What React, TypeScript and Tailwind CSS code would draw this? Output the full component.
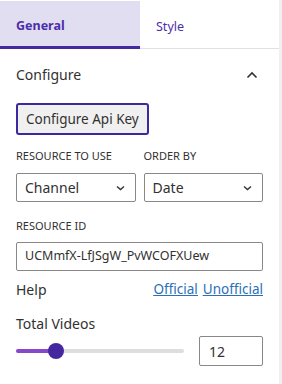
import React from "react";

export default function App() {
  const font = { fontFamily: '"Noto Sans", "Open Sans", sans-serif' };
  return (
    <div className="w-[282px] h-[384px] flex bg-white overflow-hidden text-[#323130]" style={font}>
      <div className="flex-1 flex flex-col">
        <div className="flex pt-[1px]">
          <div className="w-[140px] h-[48px] bg-[#e2def2] border-b-[3px] border-[#4527a0] flex items-center pt-[6px] pl-[16px] text-[12.5px] font-bold text-[#4b2fa8]">
            General
          </div>
          <div className="flex-1 h-[48px] border-b border-[#e1e1e1] flex items-center pt-[5px] pl-[16px] text-[12.5px] text-[#4b2fa8]">
            Style
          </div>
        </div>
        <div className="px-[16px]">
          <div className="flex items-center justify-between h-[50px] pt-[1px]">
            <span className="text-[14px]">Configure</span>
            <svg width="12" height="8" viewBox="0 0 12 8" className="mr-[5px]">
              <path d="M1.5 6.5 L6 2 L10.5 6.5" fill="none" stroke="#323130" strokeWidth="1.6" />
            </svg>
          </div>
          <div className="mt-[4px]">
            <button className="h-[32px] px-[8px] rounded-[3px] border-2 border-[#3b2a9c] bg-[#f0f0f0] text-[13.5px] text-[#323130]">
              Configure Api Key
            </button>
          </div>
          <div className="grid grid-cols-2 gap-[8px] mt-[13px]">
            <div>
              <div className="text-[11px] h-[16px] leading-[16px] uppercase">Resource to use</div>
              <div className="mt-[9px] h-[29px] border border-[#8a8886] rounded-[2px] flex items-center justify-between pl-[8px] pr-[10px] text-[14px]">
                <span>Channel</span>
                <svg width="9" height="6" viewBox="0 0 9 6"><path d="M1 1.5 L4.5 4.5 L8 1.5" fill="none" stroke="#323130" strokeWidth="1.4" /></svg>
              </div>
            </div>
            <div>
              <div className="text-[11px] h-[16px] leading-[16px] uppercase">Order by</div>
              <div className="mt-[9px] h-[29px] border border-[#8a8886] rounded-[2px] flex items-center justify-between pl-[8px] pr-[10px] text-[14px]">
                <span>Date</span>
                <svg width="9" height="6" viewBox="0 0 9 6"><path d="M1 1.5 L4.5 4.5 L8 1.5" fill="none" stroke="#323130" strokeWidth="1.4" /></svg>
              </div>
            </div>
          </div>
          <div className="text-[11px] h-[16px] leading-[16px] uppercase mt-[16px]">Resource ID</div>
          <div className="mt-[8px] h-[29px] border border-[#8a8886] rounded-[2px] flex items-center pl-[8px] text-[12.5px]">
            UCMmfX-LfJSgW_PvWCOFXUew
          </div>
          <div className="flex items-center justify-between mt-[7px] h-[22px] text-[14px]">
            <span>Help</span>
            <div className="flex gap-[5px] text-[13.5px] text-[#2a6fba] underline">
              <a>Official</a>
              <a>Unofficial</a>
            </div>
          </div>
          <div className="text-[14px] mt-[14px] h-[20px] leading-[20px]">Total Videos</div>
          <div className="flex items-center justify-between mt-[2px]">
            <div className="relative w-[168px] h-[16px] flex items-center">
              <div className="w-full h-[4px] rounded-full bg-[#dedede]" />
              <div className="absolute left-0 top-[6px] w-[40px] h-[4px] rounded-full bg-[#8748c9]" />
              <div className="absolute left-[32px] top-0 w-[16px] h-[16px] rounded-full bg-[#4527a0]" />
            </div>
            <div className="w-[64px] h-[30px] border border-[#8a8886] rounded-[2px] flex items-center pl-[9px] text-[14px]">
              12
            </div>
          </div>
        </div>
      </div>
      <div className="w-[3px] bg-[#f0f0f0]" />
    </div>
  );
}
